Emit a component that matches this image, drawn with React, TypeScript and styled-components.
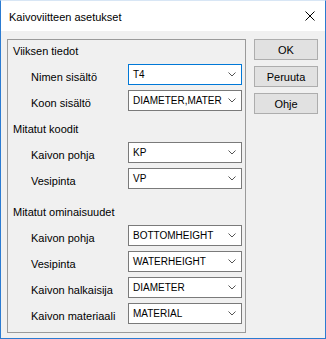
import styled, { createGlobalStyle } from "styled-components";

const GlobalStyle = createGlobalStyle`
  html, body {
    margin: 0;
    padding: 0;
    background: #ffffff;
  }
  * {
    box-sizing: border-box;
  }
`;

const Window = styled.div`
  width: 326px;
  height: 339px;
  display: flex;
  flex-direction: column;
  border: 1px solid #2b7bd1;
  border-top-color: #d8e6f5;
  font-family: "Liberation Sans", Arial, sans-serif;
  font-size: 11px;
  color: #000000;
  overflow: hidden;
`;

const TitleBar = styled.div`
  height: 30px;
  flex: none;
  display: flex;
  align-items: center;
  justify-content: space-between;
  background: #ffffff;
  padding-left: 8px;
  padding-right: 10px;
`;

const Title = styled.div`
  font-size: 11px;
  padding-top: 1px;
`;

const Body = styled.div`
  flex: 1;
  display: flex;
  flex-direction: row;
  align-items: flex-start;
  gap: 8px;
  background: #f0f0f0;
  padding: 8px 6px 0 6px;
`;

const Group = styled.div`
  width: 239px;
  height: 294px;
  border: 1px solid #9a9a9a;
  padding: 3px 3px 0 5px;
`;

const Heading = styled.div<{ $top: number }>`
  height: 16px;
  line-height: 16px;
  margin-top: ${(p) => p.$top}px;
  margin-bottom: 5px;
`;

const Rows = styled.div`
  display: flex;
  flex-direction: column;
  gap: 5px;
`;

const Row = styled.div`
  display: flex;
  align-items: center;
  padding-left: 18px;
`;

const Label = styled.div`
  flex: 1;
  padding-top: 4px;
`;

const Combo = styled.div<{ $focus?: boolean }>`
  width: 114px;
  height: 21px;
  display: flex;
  align-items: center;
  justify-content: space-between;
  background: #ffffff;
  border: 1px solid ${(p) => (p.$focus ? "#0078d7" : "#7a7a7a")};
  padding: 0 5px 0 4px;
  font-size: 10px;
  white-space: nowrap;
  overflow: hidden;
`;

const ButtonColumn = styled.div`
  display: flex;
  flex-direction: column;
  gap: 6px;
  padding-top: 0px;
`;

const Button = styled.div`
  width: 64px;
  height: 21px;
  display: flex;
  align-items: center;
  justify-content: center;
  background: #e1e1e1;
  border: 1px solid #adadad;
`;

function Chevron() {
  return (
    <svg width="8" height="5" viewBox="0 0 8 5">
      <path d="M0.5 0.5 L4 4 L7.5 0.5" fill="none" stroke="#555555" strokeWidth="1" />
    </svg>
  );
}

function CloseIcon() {
  return (
    <svg width="10" height="10" viewBox="0 0 10 10">
      <path d="M0.5 0.5 L9.5 9.5 M9.5 0.5 L0.5 9.5" stroke="#000000" strokeWidth="1" />
    </svg>
  );
}

type Field = { label: string; value: string; focus?: boolean };

const sections: { title: string; top: number; fields: Field[] }[] = [
  {
    title: "Viiksen tiedot",
    top: 0,
    fields: [
      { label: "Nimen sisältö", value: "T4", focus: true },
      { label: "Koon sisältö", value: "DIAMETER,MATER" },
    ],
  },
  {
    title: "Mitatut koodit",
    top: 10,
    fields: [
      { label: "Kaivon pohja", value: "KP" },
      { label: "Vesipinta", value: "VP" },
    ],
  },
  {
    title: "Mitatut ominaisuudet",
    top: 15,
    fields: [
      { label: "Kaivon pohja", value: "BOTTOMHEIGHT" },
      { label: "Vesipinta", value: "WATERHEIGHT" },
      { label: "Kaivon halkaisija", value: "DIAMETER" },
      { label: "Kaivon materiaali", value: "MATERIAL" },
    ],
  },
];

export default function App() {
  return (
    <>
      <GlobalStyle />
      <Window>
        <TitleBar>
          <Title>Kaivoviitteen asetukset</Title>
          <CloseIcon />
        </TitleBar>
        <Body>
          <Group>
            {sections.map((s) => (
              <div key={s.title}>
                <Heading $top={s.top}>{s.title}</Heading>
                <Rows>
                  {s.fields.map((f, idx) => (
                    <Row key={idx}>
                      <Label>{f.label}</Label>
                      <Combo $focus={f.focus}>
                        <span>{f.value}</span>
                        <Chevron />
                      </Combo>
                    </Row>
                  ))}
                </Rows>
              </div>
            ))}
          </Group>
          <ButtonColumn>
            <Button>OK</Button>
            <Button>Peruuta</Button>
            <Button>Ohje</Button>
          </ButtonColumn>
        </Body>
      </Window>
    </>
  );
}
